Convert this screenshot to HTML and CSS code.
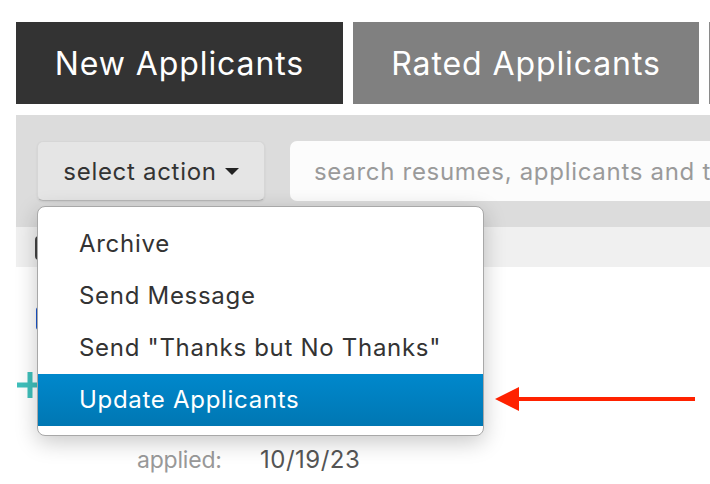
FILE: index.html
```html
<!DOCTYPE html>
<html>
<head>
<meta charset="utf-8">
<link rel="stylesheet" href="styles.css">
</head>
<body>
<div class="page">
  <nav class="tabs">
    <div class="tab tab-active">New Applicants</div>
    <div class="tab tab-rated">Rated Applicants</div>
    <div class="tab tab-more"></div>
  </nav>

  <div class="toolbar-wrap">
    <div class="toolbar">
      <button class="select-btn">select action <span class="caret"></span></button>
      <div class="search">search resumes, applicants and tags</div>
    </div>
    <div class="list-head">
      <span class="check"></span>
    </div>

    <ul class="menu">
      <li class="menu-item">Archive</li>
      <li class="menu-item">Send Message</li>
      <li class="menu-item">Send "Thanks but No Thanks"</li>
      <li class="menu-item menu-item-active">Update Applicants</li>
    </ul>

    <svg class="arrow" width="202" height="26" viewBox="0 0 202 26">
      <line x1="20" y1="13" x2="200" y2="13" stroke="#ff2200" stroke-width="4"/>
      <polygon points="0,13 24,1 24,25" fill="#ff2200"/>
    </svg>
  </div>

  <div class="content">
    <div class="flag"></div>
    <div class="plus">
      <svg width="26" height="26" viewBox="0 0 26 26">
        <rect x="10.5" y="0" width="5" height="26" fill="#3fbfbb"/>
        <rect x="0" y="10.5" width="26" height="5" fill="#3fbfbb"/>
      </svg>
    </div>
    <div class="applied">
      <span class="label">applied:</span>
      <span class="date">10/19/23</span>
    </div>
  </div>
</div>
</body>
</html>
```

FILE: styles.css
```css
html, body {
  margin: 0;
  padding: 0;
  background: #ffffff;
}

body {
  font-family: "Inter", "Liberation Sans", sans-serif;
  width: 710px;
  height: 484px;
  overflow: hidden;
}

.page {
  padding-left: 16px;
  height: 484px;
  box-sizing: border-box;
  overflow: hidden;
}

.tabs {
  display: flex;
  gap: 10px;
  margin-top: 22px;
  height: 82px;
}

.tab {
  display: flex;
  align-items: center;
  justify-content: center;
  color: #ffffff;
  font-size: 32px;
  letter-spacing: 0.9px;
  box-sizing: border-box;
  flex: none;
  padding-top: 1px;
}

.tab-active {
  width: 327px;
  background: #333333;
}

.tab-rated {
  width: 346px;
  background: #808080;
}

.tab-more {
  width: 1px;
  border-left: 1px solid #8a8a8a;
}

.toolbar-wrap {
  position: relative;
  margin-top: 11px;
}

.toolbar {
  display: flex;
  align-items: flex-start;
  gap: 25px;
  background: #dcdcdc;
  padding: 26px 0 26px 21px;
  overflow: hidden;
}

.select-btn {
  font-family: inherit;
  width: 228px;
  height: 60px;
  box-sizing: border-box;
  background: #e5e5e5;
  border: 1px solid #d6d6d6;
  border-bottom-color: #b8b8b8;
  border-radius: 6px;
  box-shadow: 0 1px 2px rgba(0, 0, 0, 0.08);
  font-size: 24px;
  letter-spacing: 0.7px;
  color: #333333;
  display: flex;
  align-items: center;
  justify-content: center;
  gap: 8px;
  padding: 0;
  flex: none;
}

.caret {
  width: 0;
  height: 0;
  border-left: 7px solid transparent;
  border-right: 7px solid transparent;
  border-top: 7px solid #222222;
  margin-top: 1px;
}

.search {
  flex: 1;
  min-width: 0;
  height: 60px;
  background: #fcfcfc;
  border-radius: 7px 0 0 7px;
  color: #9a9a9a;
  font-size: 24px;
  letter-spacing: 0.7px;
  white-space: nowrap;
  overflow: hidden;
  padding-left: 24px;
  display: flex;
  align-items: center;
  box-sizing: border-box;
}

.list-head {
  height: 40px;
  background: #f0f0f0;
  position: relative;
}

.check {
  position: absolute;
  left: 19px;
  top: 9px;
  width: 20px;
  height: 20px;
  border: 2px solid #444;
  border-radius: 4px;
  background: #fff;
}

.menu {
  position: absolute;
  left: 21px;
  top: 91px;
  width: 447px;
  height: 230px;
  box-sizing: border-box;
  margin: 0;
  padding: 11px 0;
  list-style: none;
  background: #ffffff;
  border: 1px solid #a8a8a8;
  border-radius: 8px;
  box-shadow: 0 6px 22px rgba(0, 0, 0, 0.22);
  z-index: 5;
}

.menu-item {
  height: 52px;
  line-height: 51px;
  padding-left: 41px;
  font-size: 24px;
  letter-spacing: 0.7px;
  color: #333333;
  white-space: nowrap;
}

.menu-item-active {
  color: #ffffff;
  background: linear-gradient(to bottom, #0088cc, #0077b3);
}

.arrow {
  position: absolute;
  left: 479px;
  top: 271px;
}

.content {
  position: relative;
}

.flag {
  margin-top: 40px;
  margin-left: 20px;
  width: 12px;
  height: 23px;
  background: #1a56cc;
  border-radius: 3px;
}

.plus {
  margin-top: 42px;
  margin-left: 1px;
  height: 26px;
}

.plus svg {
  display: block;
}

.applied {
  display: flex;
  align-items: baseline;
  margin-top: 47px;
  padding-left: 121px;
  font-size: 24px;
  letter-spacing: 0.5px;
}

.label {
  color: #999999;
  width: 123px;
  font-size: 23px;
  letter-spacing: -0.2px;
}

.date {
  color: #555555;
}
```
